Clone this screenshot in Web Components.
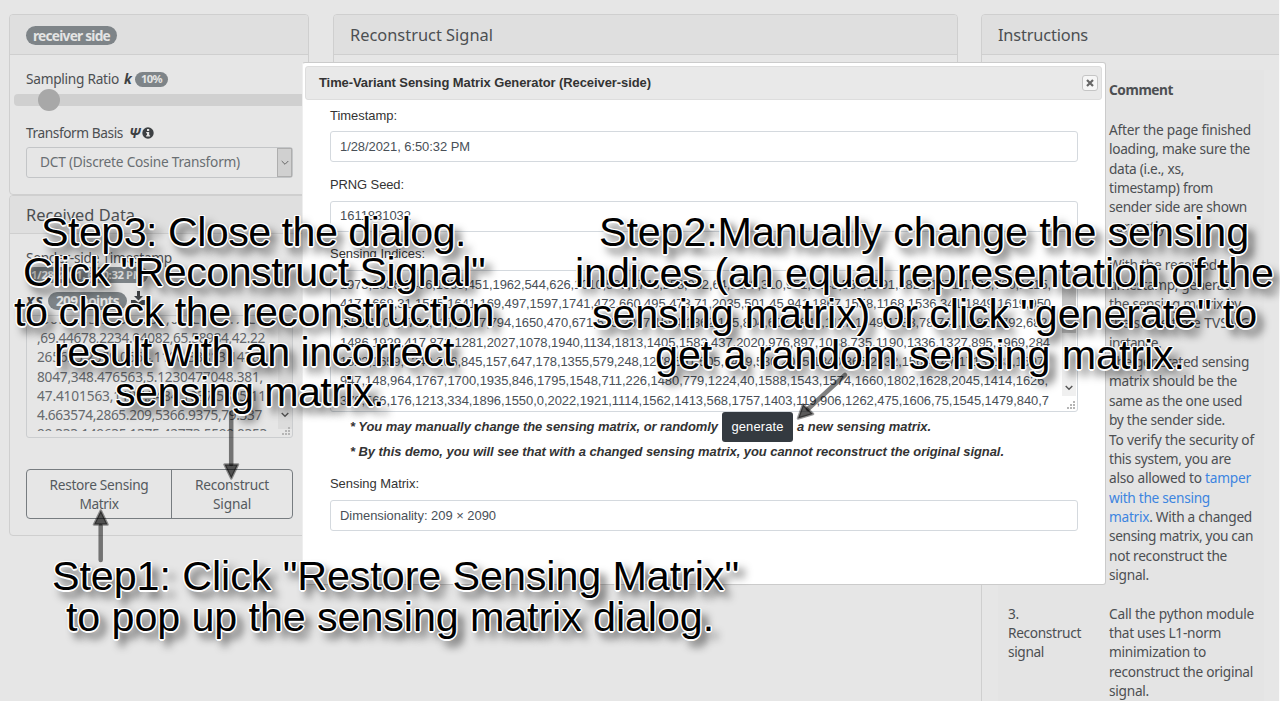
<!DOCTYPE html>
<html lang="en"><head><meta charset="utf-8"><title>Receiver side</title>
<style>
html,body{margin:0;height:701px;overflow:hidden;background:#e6e6e6}
body{position:relative;width:1280px;font:13.7px/19.35px "Noto Sans","Open Sans",sans-serif;color:#4c4f52}
main{display:flex;align-items:flex-start;padding:14px 0 0 9px;box-sizing:border-box;width:1279px;height:701px;overflow:hidden}
main>section{flex:none;display:flex;flex-direction:column}
.a{width:300px;margin-right:24px}.b{width:625px;margin-right:23px}.c{width:320px}
.edge{position:absolute;right:0;top:0;width:1px;height:701px;background:#fafafa}
</style></head><body>
<main>
<section class="a">
 <panel-card style="height:181px"><badge-pill slot="head" style="--h:19px;--px:7px;margin-top:2px"><fit-line w="77">receiver side</fit-line></badge-pill><sampling-form></sampling-form></panel-card>
 <panel-card style="height:341px;--hh:38px"><fit-line slot="head" w="109">Received Data</fit-line><received-data></received-data></panel-card>
</section>
<section class="b"><panel-card style="height:500px"><fit-line slot="head" w="143">Reconstruct Signal</fit-line></panel-card></section>
<section class="c"><panel-card style="height:760px"><fit-line slot="head" w="90">Instructions</fit-line><instruction-table></instruction-table></panel-card></section>
</main>
<div class="edge"></div>
<matrix-dialog></matrix-dialog>
<step-arrows></step-arrows>
<step-note style="left:14px;top:212px;--step:40px">
 <fit-line w="425" style="margin-left:27px">Step3: Close the dialog.</fit-line>
 <fit-line w="462" style="margin-left:9px">Click "Reconstruct Signal"</fit-line>
 <fit-line w="480">to check the reconstruction</fit-line>
 <fit-line w="400" style="margin-left:40px">result with an incorrect</fit-line>
 <fit-line w="269" style="margin-left:101px">sensing matrix.</fit-line>
</step-note>
<step-note style="left:575px;top:212px;--step:41px">
 <fit-line w="650" style="margin-left:24px">Step2:Manually change the sensing</fit-line>
 <fit-line w="699">indices (an equal representation of the</fit-line>
 <fit-line w="665" style="margin-left:17px">sensing matrix) or click "generate" to</fit-line>
 <fit-line w="530" style="margin-left:80px">get a random sensing matrix.</fit-line>
</step-note>
<step-note style="left:52px;top:556px;--step:41px">
 <fit-line w="687">Step1: Click "Restore Sensing Matrix"</fit-line>
 <fit-line w="648" style="margin-left:14px">to pop up the sensing matrix dialog.</fit-line>
</step-note>
<script>
const define=(name,html)=>customElements.define(name,class extends HTMLElement{
  constructor(){super();this.attachShadow({mode:'open'}).innerHTML=html}
});
define('panel-card',`<style>
:host{display:flex;flex-direction:column;box-sizing:border-box;border:1px solid #cfcfcf;border-radius:4px;overflow:hidden}
header{flex:none;box-sizing:border-box;height:var(--hh,40px);display:flex;align-items:center;padding:0 16px;background:#dfdfdf;border-bottom:1px solid #cfcfcf;font-size:16.4px}
.body{flex:1;min-height:0}
</style><header><slot name="head"></slot></header><div class="body"><slot></slot></div>`);
define('badge-pill',`<style>
:host{display:inline-flex;align-items:center;height:var(--h,16px);padding:0 var(--px,6px);border-radius:10px;background:#7e8488;color:#e4e4e4;font-weight:700;font-size:var(--fs,13.7px);line-height:1}
</style><slot></slot>`);
define('sampling-form',`<style>
:host{display:block;padding:14px 16px 0}
.row{display:flex;align-items:center;height:19px}
b{font-style:italic;color:#3d4043}
.track{display:flex;align-items:center;height:12px;margin:6px -16px 0 -12px;background:#d0d0d0;border-radius:4px;width:300px}
.thumb{width:22px;height:22px;border-radius:50%;background:#a8a8a8;margin-left:24px}
.sel{display:flex;box-sizing:border-box;width:267px;height:31px;margin-top:5px;border:1px solid #c3c5c7;border-radius:3px;align-items:center;color:#696e72;justify-content:space-between;padding-left:13px}
.sel>fit-line{margin-top:-2px}
.drop{width:15px;height:29px;background:#d0d0d0;border:1px solid #aeaeae;box-sizing:border-box;display:flex;align-items:center;justify-content:center}
</style>
<div class="row"><fit-line w="93">Sampling Ratio</fit-line><b style="margin:0 3px 0 5px"><fit-line w="8">k</fit-line></b><badge-pill style="--h:15px;--fs:11.2px;margin-top:1px"><fit-line w="21">10%</fit-line></badge-pill></div>
<div class="track"><div class="thumb"></div></div>
<div class="row" style="margin-top:17px"><fit-line w="97">Transform Basis</fit-line><b style="margin:0 1px 0 6px"><fit-line w="12">Ψ</fit-line></b>
<svg width="12" height="12"><circle cx="6" cy="6" r="5.7" fill="#3d4043"/><path d="M5 2h2.2v2H5zM4.2 5h3v3.2h.9v1.3H4.1V8.200h.9V6.300h-.8z" fill="#e6e6e6"/></svg></div>
<div class="sel"><fit-line w="200">DCT (Discrete Cosine Transform)</fit-line><div class="drop"><svg width="8" height="6"><path d="M.7 1 4 4.300 7.300 1" fill="none" stroke="#666"/></svg></div></div>`);
define('received-data',`<style>
:host{display:block;padding:14px 15px 0 16px}
.row{display:flex;align-items:center}
b{font-style:italic;color:#3d4043}
.area{box-sizing:border-box;width:267px;height:123px;margin-top:5px;border:1px solid #cbcdcf;border-radius:3px;padding:6px 0;display:flex;color:#65696d;position:relative}
.clip{height:109px;overflow:hidden;padding-left:10px;flex:1}
.in{margin-top:-13px;display:flex;flex-direction:column;line-height:19.2px}
.sb{width:14px;height:107px;background:#dcdcdc;display:flex;align-items:flex-end;justify-content:center}
.sb svg{margin-bottom:11px}
.grip{position:absolute;right:1px;bottom:1px}
.btns{display:flex;box-sizing:border-box;width:267px;height:50px;margin-top:31px;border:1px solid #777c80;border-radius:4px;color:#555a5e}
.btns div{display:flex;flex-direction:column;align-items:center;justify-content:center;width:144px;line-height:19px}
.btns div+div{flex:1;border-left:1px solid #777c80}
</style>
<div class="row" style="height:19px"><fit-line w="146">Sender-side Timestamp</fit-line></div>
<badge-pill style="--h:16px;--fs:11.3px;--px:5px;display:flex;width:112px"><fit-line w="112">1/28/2021, 6:50:32 PM</fit-line></badge-pill>
<div class="row" style="height:19px;margin-top:8px"><b style="font-size:15.5px"><fit-line w="18">xs</fit-line></b><badge-pill style="--h:18px;--px:8px;margin:0 4px"><fit-line w="63">209 points</fit-line></badge-pill>
<svg width="15" height="15" viewBox="0 0 15 15" style="margin-top:-4px"><path d="M6 0h3v5h3L7.500 9.500 3 5h3zM0 9h4l3.500 2.500L11 9h4v5H0z" fill="#3f4245"/></svg></div>
<div class="area"><div class="clip"><div class="in">
<fit-line w="228">,30.4233,2204.184,0.2206647,20</fit-line>
<fit-line w="228">,69.44678,2234.04082,65.58984,42.22</fit-line>
<fit-line w="226">265625,2370.0664,1100.33813,1438.</fit-line>
<fit-line w="226">8047,348.476563,5.1230477048.381,</fit-line>
<fit-line w="229">47.4101563,1127.3484,1037.5325,11</fit-line>
<fit-line w="225">4.663574,2865.209,5366.9375,79.337</fit-line>
<fit-line w="230">99.333,149635,1375.42773,5599.0353</fit-line></div></div>
<div class="sb"><svg width="8" height="6"><path d="M.7 1 4 4.300 7.300 1" fill="none" stroke="#555" stroke-width="1.400"/></svg></div>
<svg class="grip" width="9" height="9" fill="#b5b5b5"><path d="M0 6h2v2H0zM3 6h2v2H3zM6 6h2v2H6zM3 3h2v2H3zM6 3h2v2H6zM6 0h2v2H6z"/></svg></div>
<div class="btns"><div><fit-line w="99">Restore Sensing</fit-line><fit-line w="39">Matrix</fit-line></div><div><fit-line w="74">Reconstruct</fit-line><fit-line w="38">Signal</fit-line></div></div>`);
define('instruction-table',`<style>
:host{display:block;margin:15px 0 0 16px;width:266px}
.r{display:grid;grid-template-columns:101px 1fr;padding:9.7px 0 9.700px 10px;background:#e4e4e4}
.r+.r{padding-bottom:9.650px}
.r>div{display:flex;flex-direction:column;align-items:flex-start}
span{color:#3d84e0}
</style>
<div class="r" style="padding-top:10px;padding-bottom:11px"><div></div><div><b><fit-line w="64">Comment</fit-line></b></div></div>
<div class="r"><div></div><div>
<fit-line w="142">After the page finished</fit-line><fit-line w="141">loading, make sure the</fit-line><fit-line w="75">data (i.e., xs,</fit-line><fit-line w="104">timestamp) from</fit-line><fit-line w="138">sender side are shown</fit-line><fit-line w="60">correctly.</fit-line></div></div>
<div class="r"><div></div><div>
<fit-line w="108">With the received</fit-line><fit-line w="127">timestamp, generate</fit-line><fit-line w="132">the sensing matrix by</fit-line><fit-line w="141">the same time TVSMG</fit-line><fit-line w="52">instance.</fit-line><fit-line w="140">The generated sensing</fit-line><fit-line w="128">matrix should be the</fit-line><fit-line w="133">same as the one used</fit-line><fit-line w="116">by the sender side.</fit-line><fit-line w="145">To verify the security of</fit-line><fit-line w="122">this system, you are</fit-line><fit-line w="142">also allowed to <span>tamper</span></fit-line><fit-line w="101"><span>with the sensing</span></fit-line><fit-line w="143"><span>matrix</span>. With a changed</fit-line><fit-line w="144">sensing matrix, you can</fit-line><fit-line w="118">not reconstruct the</fit-line><fit-line w="40">signal.</fit-line></div></div>
<div class="r"><div><fit-line w="11">3.</fit-line><fit-line w="73">Reconstruct</fit-line><fit-line w="36">signal</fit-line></div><div>
<fit-line w="145">Call the python module</fit-line><fit-line w="112">that uses L1-norm</fit-line><fit-line w="97">minimization to</fit-line><fit-line w="144">reconstruct the original</fit-line><fit-line w="40">signal.</fit-line></div></div>`);
define('matrix-dialog',`<style>
:host{position:absolute;left:302px;top:62px;width:804px;height:523px;box-sizing:border-box;border:1px solid #cbcbcb;border-left-color:#eee;border-radius:3px;background:#fff;padding:3px;font:12.96px/19.3px "Liberation Sans",Arial,sans-serif;color:#333}
.bar{display:flex;align-items:center;justify-content:space-between;box-sizing:border-box;width:797px;height:34px;margin-left:-1px;padding:0 3px 1px 13px;background:#e9e9e9;border:1px solid #ddd;border-radius:3px;font-weight:700}
.x{width:14px;height:14px;border:1px solid #c5c5c5;border-radius:3px;background:#f6f6f6;display:flex;align-items:center;justify-content:center;margin-top:1px}
.form{padding:6px 24px 0;display:flex;flex-direction:column;align-items:flex-start}
.in{box-sizing:border-box;width:748px;height:31px;border:1px solid #d4d9de;border-radius:3px;display:flex;align-items:center;padding-left:9px;color:#495057}
.in.one{margin:6px 0 13px}
.in.one fit-line{margin-top:-1px}
.area{height:142px;align-items:flex-start;padding-top:4px;margin-top:7px;position:relative}
.lines{display:flex;flex-direction:column;width:722px}
.sb{width:14px;height:125px;background:#f0f0f0;margin-top:-4px;display:flex;flex-direction:column;align-items:center}
.sb i{width:14px;height:52px;background:#c8c8c8;margin:10px 0 52px}
.grip{position:absolute;right:1px;bottom:1px}
.note{font-weight:700;font-style:italic;display:flex;align-items:center;margin-left:20px}
.btn{display:flex;width:71px;height:30px;border-radius:3px;background:#343a40;color:#fff;font-weight:400;font-style:normal;align-items:center;justify-content:center;margin:0 4px 0 4px}
</style>
<div class="bar"><fit-line w="332">Time-Variant Sensing Matrix Generator (Receiver-side)</fit-line><div class="x"><svg width="8" height="8"><path d="M1 1 7 7M7 1 1 7" stroke="#666" stroke-width="2.200"/></svg></div></div>
<div class="form">
<fit-line w="67">Timestamp:</fit-line><div class="in one"><fit-line w="130">1/28/2021, 6:50:32 PM</fit-line></div>
<fit-line w="74">PRNG Seed:</fit-line><div class="in one" style="margin:6px 0 12px"><fit-line w="71">1611831032</fit-line></div>
<fit-line w="95">Sensing Indices:</fit-line>
<div class="in area"><div class="lines">
<fit-line w="711">1973,1036,1406,1655,451,1962,544,626,1010,539,1745,258,902,64,1129,310,951,1143,539,1791,1824,1471,1788,720,1215,</fit-line>
<fit-line w="711">417,1668,31,1515,1641,169,497,1597,1741,472,660,495,473,71,2035,501,45,941,1867,1558,1168,1536,341,1849,1619,950</fit-line>
<fit-line w="711">,253,1507,1724,137,1597,794,1650,470,671,615,2097,1554,1862,105,804,607,1842,1117,1049,1783,78,741,1582,1792,682,</fit-line>
<fit-line w="710">1486,1929,417,871,1281,2027,1078,1940,1134,1813,1405,1583,437,2020,976,897,1088,735,1190,1336,1327,895,1969,284</fit-line>
<fit-line w="704">1822,1659,1249,266,845,157,647,178,1355,579,248,1278,591,505,1479,530,2015,1340,365,2032,1564,147,1713,283,1597</fit-line>
<fit-line w="708">947,148,964,1767,1700,1935,846,1795,1548,711,226,1480,779,1224,40,1588,1543,1574,1660,1802,1628,2045,1414,1626,</fit-line>
<fit-line w="709">378,566,176,1213,334,1896,1550,0,2022,1921,1114,1562,1413,568,1757,1403,119,906,1262,475,1606,75,1545,1479,840,7</fit-line>
</div><div class="sb"><i></i><svg width="8" height="6"><path d="M.7 1 4 4.300 7.300 1" fill="none" stroke="#555" stroke-width="1.400"/></svg></div>
<svg class="grip" width="9" height="9" fill="#b5b5b5"><path d="M0 6h2v2H0zM3 6h2v2H3zM6 6h2v2H6zM3 3h2v2H3zM6 3h2v2H6zM6 0h2v2H6z"/></svg></div>
<div class="note"><fit-line w="368">* You may manually change the sensing matrix, or randomly</fit-line><div class="btn"><fit-line w="52">generate</fit-line></div><fit-line w="134">a new sensing matrix.</fit-line></div>
<div class="note"><fit-line w="654">* By this demo, you will see that with a changed sensing matrix, you cannot reconstruct the original signal.</fit-line></div>
<fit-line w="89" style="margin-top:13px">Sensing Matrix:</fit-line><div class="in one" style="margin-top:7px"><fit-line w="156">Dimensionality: 209 × 2090</fit-line></div>
</div>`);
define('step-note',`<style>
:host{position:absolute;display:flex;flex-direction:column;align-items:flex-start;font:41.300px/var(--step) "Liberation Sans",Arial,sans-serif;color:#000;
text-shadow:1.500px 0 .5px #fff,-1.500px 0 .5px #fff,0 1.500px .5px #fff,0 -1.500px .5px #fff,1px 1px .5px #fff,-1px -1px .5px #fff,1px -1px .5px #fff,-1px 1px .5px #fff,6px 7px 8px rgba(0,0,0,.8)}
</style><slot></slot>`);
define('step-arrows',`<style>:host{position:absolute;left:0;top:0;width:1280px;height:701px}svg{display:block}</style>
<svg width="1280" height="701"><g stroke="#000" stroke-opacity=".5" stroke-width="4.500" stroke-linecap="round"><path d="M231.200 413V464M100.700 560V526M845 375 808 409"/></g>
<g fill="#000" fill-opacity=".65" stroke="#000" stroke-opacity=".4" stroke-width="2.500" stroke-linejoin="round"><path d="M224.500 464.500h13.500l-6.700 14zM94 524.500h13.500l-6.700-14zM798 418.500l5-14 10 9.500z"/></g></svg>`);
// A single line of text whose tracking is adjusted so that it spans "w" pixels.
customElements.define('fit-line',class extends HTMLElement{
  constructor(){super();this.attachShadow({mode:'open'}).innerHTML='<style>:host{display:block;flex:none;white-space:pre}span{display:inline-block}</style><span><slot></slot></span>'}
  connectedCallback(){
    const s=this.shadowRoot.querySelector('span'),w=+this.getAttribute('w');
    const n=this.textContent.length;
    s.style.letterSpacing=(w-s.getBoundingClientRect().width)/n+'px';
  }
});
</script></body></html>
